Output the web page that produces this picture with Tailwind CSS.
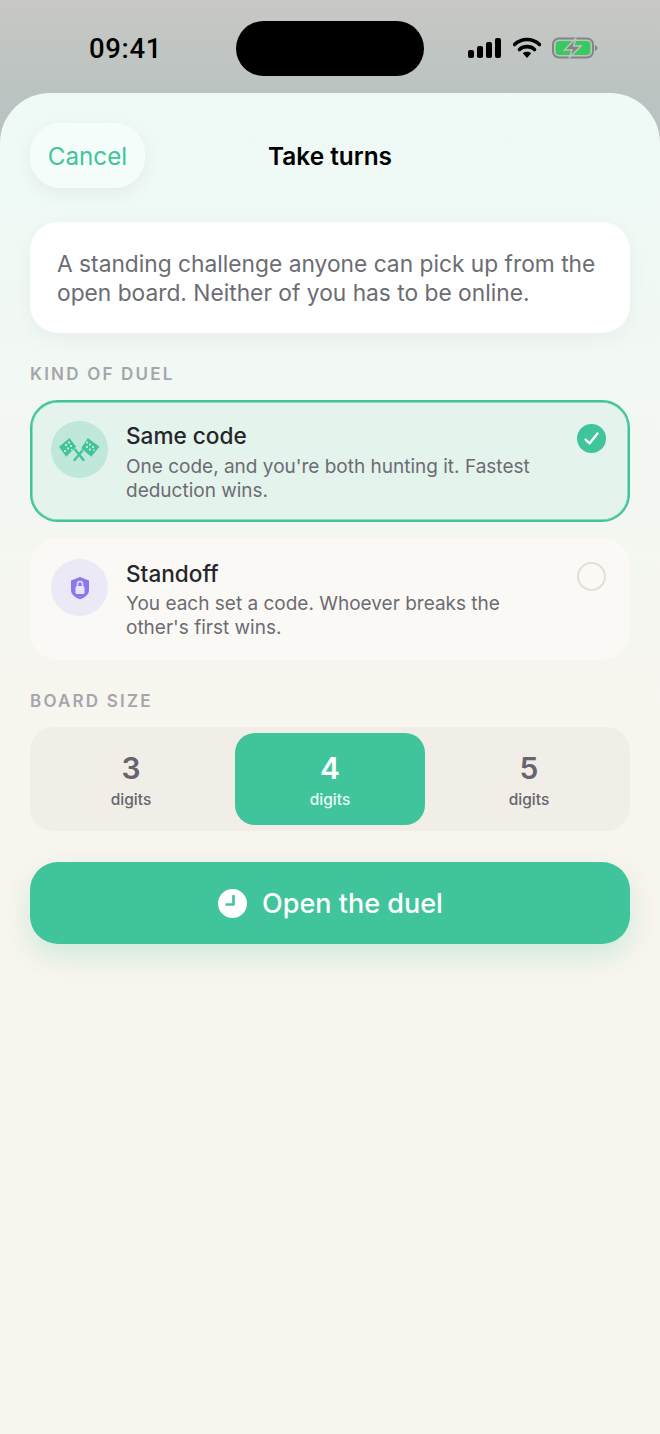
<!DOCTYPE html>
<html><head><meta charset="utf-8">
<script src="https://cdn.jsdelivr.net/npm/@tailwindcss/browser@4"></script>
</head>
<body class="m-0">
<div class="w-[660px] h-[1434px] overflow-hidden flex flex-col bg-gradient-to-b from-[#c8c8c4] from-0% to-[#bac3c1] to-[6.5%] font-['Inter',sans-serif]">
  <div class="h-[93px] shrink-0 flex items-start">
    <div class="w-[236px] pt-[32px] text-center pl-[15px] text-[27.500px] leading-[34px] font-medium text-black font-['Roboto',sans-serif] tracking-[0.6px]">09:41</div>
    <div class="mt-[21px] w-[188px] h-[55px] rounded-full bg-black"></div>
    <div class="ml-[44px] mt-[37px] flex items-center">
      <svg width="34" height="22" viewBox="0 0 34 22"><rect x="0" y="13" width="6" height="8" rx="2" fill="#000"/><rect x="9" y="9" width="6" height="12" rx="2" fill="#000"/><rect x="18" y="5" width="6" height="16" rx="2" fill="#000"/><rect x="27" y="1" width="6" height="20" rx="2" fill="#000"/></svg>
      <svg width="28" height="22" viewBox="0 0 28 22" class="ml-[11px]"><path d="M1.5 7.5C8.5 .8 19.5 .8 26.5 7.5" fill="none" stroke="#000" stroke-width="3.6" stroke-linecap="round"/><path d="M6.500 12.500C10.700 8.700 17.300 8.700 21.500 12.500" fill="none" stroke="#000" stroke-width="3.600" stroke-linecap="round"/><path d="M9.800 16.200C12.300 14.300 15.700 14.300 18.200 16.200L14 21Z" fill="#000"/></svg>
      <svg width="46" height="22" viewBox="0 0 46 22" class="ml-[11px]"><rect x="1" y="1.500" width="40" height="19" rx="6" fill="none" stroke="#7f8684" stroke-width="2"/><rect x="3.500" y="4" width="35" height="14" rx="4" fill="#3cc860"/><path d="M43 8v6c1.500-.5 2.500-1.700 2.500-3S44.500 8.500 43 8Z" fill="#7f8684"/><path d="M24 1 12.500 13H20l-3 8 12-12h-7.500Z" fill="#7f8684" stroke="#bcc4c2" stroke-width="1.500"/></svg>
    </div>
  </div>
  <div class="flex-1 rounded-t-[50px] bg-gradient-to-b from-[#eefaf6] from-0% to-[#f8f5ee] to-[52%] px-[30px] pt-[30px]">
    <div class="relative h-[65px] flex items-center">
      <div class="w-[115px] h-[65px] pt-[4px] rounded-[30px] bg-[#f5fdfa] shadow-[0_6px_18px_rgba(0,0,0,0.05)] flex items-center justify-center text-[24.200px] text-[#3fc49b]">Cancel</div>
      <div class="absolute left-0 right-0 top-[1px] bottom-0 flex items-center justify-center text-[24.400px] font-semibold text-black">Take turns</div>
    </div>
    <div class="mt-[34px] h-[111px] rounded-[28px] bg-white shadow-[0_6px_18px_rgba(60,80,70,0.05)] px-[27px] flex items-center text-[22.750px] leading-[29px] text-[#6c6c73]">
      <p>A standing challenge anyone can pick up from the open board. Neither of you has to be online.</p>
    </div>
    <div class="mt-[32px] h-[18px] text-[17px] leading-[18px] font-semibold tracking-[2.200px] text-[#a6a5ab]">KIND OF DUEL</div>
    <div class="mt-[17px] h-[122px] rounded-[28px] border-2 border-[#3fc49b] shadow-[inset_0_0_0_0.5px_#3fc49b] bg-[#e4f3ec] flex pl-[19px] pr-[22px] pt-[19px]">
      <div class="w-[57px] h-[57px] rounded-full bg-[#bfe8da] flex items-center justify-center shrink-0">
        <svg width="41" height="23" viewBox="0 0 41 23">
          <path d="M0 8.700 10.500 0 17.200 8.700 7.200 18.700Z" fill="#3fc49b"/>
          <path d="M22.200 10.300 28.800 0 40.500 8.700 32.200 18.700Z" fill="#3fc49b"/>
          <path d="M16 11.500 24.500 22M23 13 15.500 22" stroke="#3fc49b" stroke-width="2.400" stroke-linecap="round"/>
          <g fill="#bfe8da"><rect x="6" y="6" width="2" height="2"/><rect x="9" y="3.500" width="2" height="2"/><rect x="11" y="7" width="2" height="2"/><rect x="8" y="9.500" width="2" height="2"/><rect x="5" y="12" width="2" height="2"/><rect x="12" y="11" width="1.500" height="1.500"/><rect x="27" y="3.500" width="2" height="2"/><rect x="30" y="5.500" width="2" height="2"/><rect x="27" y="8" width="2" height="2"/><rect x="33" y="8" width="2" height="2"/><rect x="30" y="10.500" width="2" height="2"/><rect x="34" y="11.500" width="1.500" height="1.500"/></g>
        </svg>
      </div>
      <div class="ml-[18px] flex-1">
        <div class="text-[22.600px] leading-[30px] font-medium text-[#26262b]">Same code</div>
        <div class="mt-[4px] text-[19px] leading-[24px] text-[#6c6c73] w-[430px]">One code, and you're both hunting it. Fastest deduction wins.</div>
      </div>
      <div class="w-[29px] h-[29px] rounded-full bg-[#3fc49b] flex items-center justify-center shrink-0 mt-[3px]">
        <svg width="17" height="15" viewBox="0 0 17 15"><path d="M2.500 8.500 6.500 12.500 14.500 2.500" fill="none" stroke="#fff" stroke-width="2.400" stroke-linecap="round" stroke-linejoin="round"/></svg>
      </div>
    </div>
    <div class="mt-[16px] h-[122px] rounded-[28px] bg-[#fbf9f6] flex pl-[21px] pr-[24px] pt-[21px]">
      <div class="w-[57px] h-[57px] rounded-full bg-[#ece9f6] flex items-center justify-center shrink-0">
        <svg width="20" height="24" viewBox="0 0 20 24"><path d="M10 1 19 4.500V14c0 4-3.500 7.500-9 9.300C4.500 21.500 1 18 1 14V4.500Z" fill="#8b78ef"/><rect x="5.500" y="10" width="9" height="8" rx="1.500" fill="#e8e4fb"/><path d="M7.500 10V8a2.500 2.500 0 0 1 5 0v2" fill="none" stroke="#e8e4fb" stroke-width="1.500"/></svg>
      </div>
      <div class="ml-[18px] flex-1">
        <div class="text-[22.600px] leading-[30px] font-medium text-[#26262b]">Standoff</div>
        <div class="mt-[3px] text-[19px] leading-[24px] text-[#6c6c73] w-[430px]">You each set a code. Whoever breaks the other's first wins.</div>
      </div>
      <div class="w-[29px] h-[29px] rounded-full border-[2.500px] border-[#e2dfda] shrink-0 mt-[3px]"></div>
    </div>
    <div class="mt-[32px] h-[18px] text-[17px] leading-[18px] font-semibold tracking-[2.200px] text-[#a6a5ab]">BOARD SIZE</div>
    <div class="mt-[17px] h-[104px] rounded-[24px] bg-[#f1ede7] p-[6px] grid grid-cols-3 gap-[9px]">
      <div class="flex flex-col items-center pt-[17px] text-[#68646f]">
        <div class="text-[30px] leading-[36px] font-semibold">3</div>
        <div class="mt-[4px] text-[15.500px] leading-[20px] font-medium">digits</div>
      </div>
      <div class="rounded-[20px] bg-[#3fc49b] flex flex-col items-center pt-[17px] text-white">
        <div class="text-[30px] leading-[36px] font-semibold">4</div>
        <div class="mt-[4px] text-[15.500px] leading-[20px] font-medium text-[#ecfaf5]">digits</div>
      </div>
      <div class="flex flex-col items-center pt-[17px] text-[#68646f]">
        <div class="text-[30px] leading-[36px] font-semibold">5</div>
        <div class="mt-[4px] text-[15.500px] leading-[20px] font-medium">digits</div>
      </div>
    </div>
    <div class="mt-[31px] h-[82px] pt-[1px] pl-[1px] rounded-[28px] bg-[#3fc49b] shadow-[0_12px_28px_rgba(63,196,155,0.22)] flex items-center justify-center gap-[15px] text-white">
      <svg width="29" height="29" viewBox="0 0 29 29"><circle cx="14.500" cy="14.500" r="14.500" fill="#fff"/><path d="M15.500 7v8.500H8.500" fill="none" stroke="#3fc49b" stroke-width="2.600" stroke-linecap="round" stroke-linejoin="round"/></svg>
      <span class="text-[27px] font-medium leading-[34px]">Open the duel</span>
    </div>
  </div>
</div>
</body></html>
